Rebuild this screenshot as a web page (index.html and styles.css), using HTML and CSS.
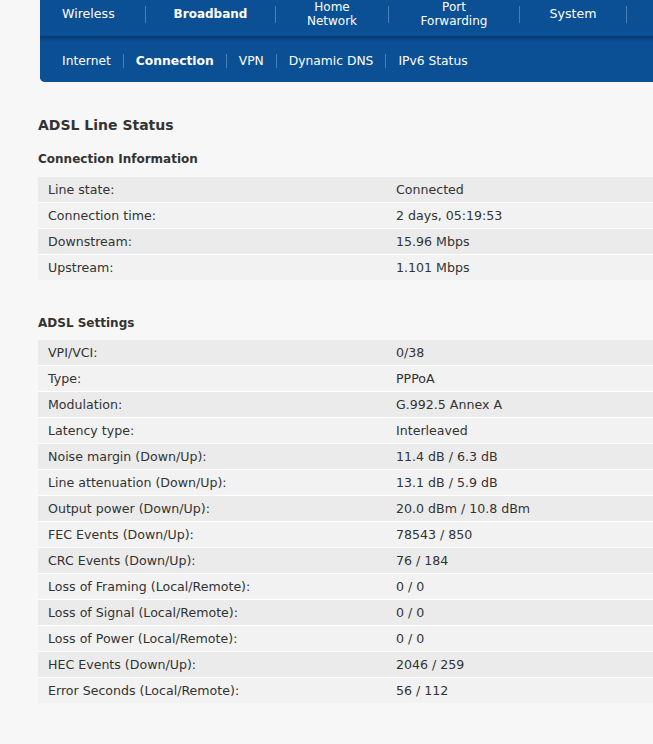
FILE: index.html
```html
<!DOCTYPE html>
<html>
  <head>
    <title>ADSL Line Status</title>
    <link rel="stylesheet" href="styles.css">
  </head>
  <body>
    <div class="nav">
      <div class="main-nav">
        <a class="item first">Wireless</a>
        <a class="item active w-broadband">Broadband</a>
        <a class="item w-home">Home<br>Network</a>
        <a class="item w-port">Port<br>Forwarding</a>
        <a class="item w-system">System</a>
        <a class="item last"></a>
      </div>
      <div class="sub-nav">
        <a class="sub first">Internet</a>
        <a class="sub active">Connection</a>
        <a class="sub">VPN</a>
        <a class="sub">Dynamic DNS</a>
        <a class="sub last">IPv6 Status</a>
      </div>
    </div>

    <div class="content">
      <h2>ADSL Line Status</h2>

      <h3 class="first-title">Connection Information</h3>
      <table class="status">
        <tr><td class="label">Line state:</td><td>Connected</td></tr>
        <tr><td class="label">Connection time:</td><td>2 days, 05:19:53</td></tr>
        <tr><td class="label">Downstream:</td><td>15.96 Mbps</td></tr>
        <tr><td class="label">Upstream:</td><td>1.101 Mbps</td></tr>
      </table>

      <h3>ADSL Settings</h3>
      <table class="status">
        <tr><td class="label">VPI/VCI:</td><td>0/38</td></tr>
        <tr><td class="label">Type:</td><td>PPPoA</td></tr>
        <tr><td class="label">Modulation:</td><td>G.992.5 Annex A</td></tr>
        <tr><td class="label">Latency type:</td><td>Interleaved</td></tr>
        <tr><td class="label">Noise margin (Down/Up):</td><td>11.4 dB / 6.3 dB</td></tr>
        <tr><td class="label">Line attenuation (Down/Up):</td><td>13.1 dB / 5.9 dB</td></tr>
        <tr><td class="label">Output power (Down/Up):</td><td>20.0 dBm / 10.8 dBm</td></tr>
        <tr><td class="label">FEC Events (Down/Up):</td><td>78543 / 850</td></tr>
        <tr><td class="label">CRC Events (Down/Up):</td><td>76 / 184</td></tr>
        <tr><td class="label">Loss of Framing (Local/Remote):</td><td>0 / 0</td></tr>
        <tr><td class="label">Loss of Signal (Local/Remote):</td><td>0 / 0</td></tr>
        <tr><td class="label">Loss of Power (Local/Remote):</td><td>0 / 0</td></tr>
        <tr><td class="label">HEC Events (Down/Up):</td><td>2046 / 259</td></tr>
        <tr><td class="label">Error Seconds (Local/Remote):</td><td>56 / 112</td></tr>
      </table>
    </div>
  </body>
</html>
```

FILE: styles.css
```css
body {
  margin: 0;
  background-color: #f7f7f7;
  color: #333;
  font-family: "DejaVu Sans", Verdana, Tahoma, sans-serif;
  font-size: 12.6px;
  overflow: hidden;
}

/* top navigation */
.nav {
  margin-left: 40px;
  background-color: #0b4f94;
  border-bottom-left-radius: 5px;
  overflow: hidden;
}

.main-nav {
  display: flex;
  align-items: center;
  height: 28px;
  padding-bottom: 8px;
}

.main-nav .item {
  height: 17px;
  display: flex;
  align-items: center;
  justify-content: center;
  text-align: center;
  color: #fff;
  font-size: 12px;
  line-height: 14px;
  border-right: 1px solid #4a7db3;
  flex-shrink: 0;
}

.main-nav .first {
  width: 106px;
  justify-content: flex-start;
  padding-left: 22px;
  box-sizing: border-box;
  font-size: 12.6px;
}

.main-nav .w-broadband { width: 129px; }
.main-nav .w-home { width: 112px; }
.main-nav .w-port { width: 130px; }
.main-nav .w-system { width: 106px; font-size: 12.6px; }
.main-nav .last { border-right: none; flex: 1; }

.main-nav .active,
.sub-nav .active {
  font-weight: bold;
  font-size: 12px;
}

.sub-nav {
  display: flex;
  align-items: center;
  height: 42px;
  padding: 4px 0 0 9px;
  background: linear-gradient(to bottom, #063a70 0, #083f7a 2px, #0b4f94 5px);
}

.sub-nav .sub {
  color: #fff;
  padding: 0 12px;
  height: 14px;
  line-height: 14px;
  font-size: 12.3px;
  border-right: 1px solid #4a7db3;
}

.sub-nav .first { padding-left: 13px; }
.sub-nav .last { border-right: none; }

/* page content */
.content {
  padding-left: 38px;
}

h2 {
  font-size: 14px;
  line-height: 18px;
  margin: 34px 0 0;
}

h3 {
  font-size: 12px;
  line-height: 16px;
  margin: 35px 0 9px;
}

h3.first-title {
  margin-top: 17px;
  margin-bottom: 10px;
}

.status {
  width: 100%;
  border-collapse: collapse;
}

.status td {
  height: 25px;
  padding: 0 10px;
  border-bottom: 1px solid #fff;
  background-color: #f2f2f2;
}

.status tr:nth-child(odd) td {
  background-color: #ebebeb;
}

.status tr:last-child td {
  border-bottom: none;
}

.status td.label {
  width: 328px;
}
```
